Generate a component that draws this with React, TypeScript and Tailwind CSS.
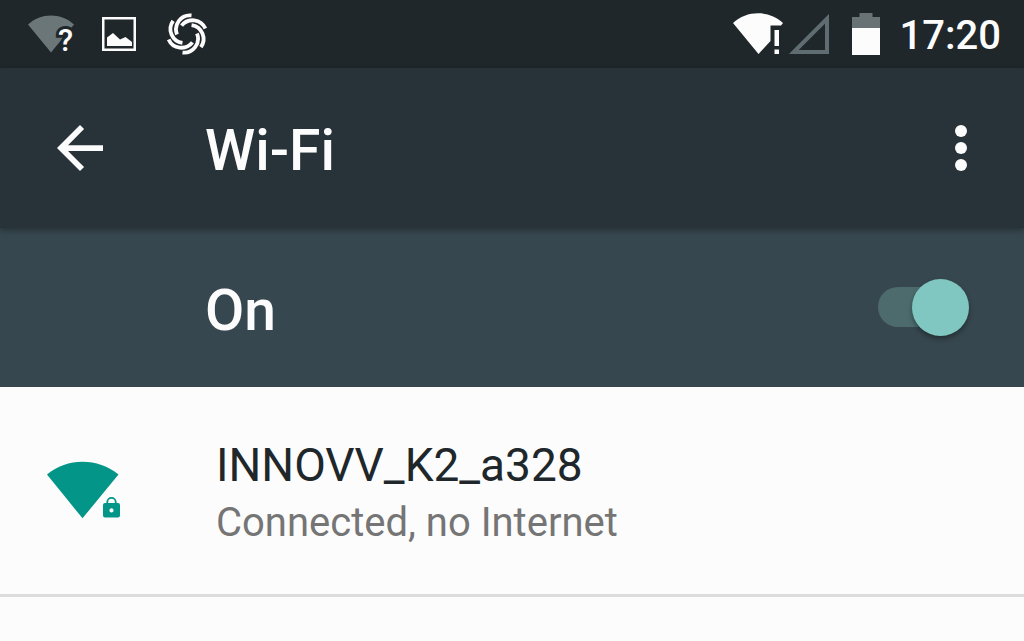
import { useState } from "react";

const WifiUnknownIcon = () => (
  <svg width="56" height="56" viewBox="0 -8 56 56" aria-hidden="true">
    <path d="M0 10.500C13-1.500 33-1.500 46 10.500L23 38.500Z" fill="#6b7679" />
    <text
      x="37.500"
      y="37"
      textAnchor="middle"
      fontSize="31"
      className="font-[Roboto,sans-serif] font-medium"
      fill="#fcfcfc"
      stroke="#20272b"
      strokeWidth="6"
      paintOrder="stroke"
    >
      ?
    </text>
  </svg>
);

const PictureIcon = () => (
  <svg width="34" height="34" viewBox="0 0 34 34" aria-hidden="true">
    <rect x="1.250" y="1.250" width="31.500" height="31.500" fill="none" stroke="#fcfcfc" strokeWidth="2.500" />
    <path d="M5 29V20.500L11 16L18 22.500L23.500 20L30 25V29Z" fill="#fcfcfc" />
  </svg>
);

const SwirlIcon = () => (
  <svg width="42" height="42" viewBox="-21 -21 42 42" aria-hidden="true">
    {[0, 60, 120, 180, 240, 300].map((angle) => (
      <path
        key={angle}
        d="M4.500 -18.600A14 14 0 0 0 -10 .5"
        transform={`rotate(${angle})`}
        fill="none"
        stroke="#fcfcfc"
        strokeWidth="3.800"
      />
    ))}
  </svg>
);

const WifiAlertIcon = () => (
  <svg width="51" height="42" viewBox="0 0 51 42" aria-hidden="true">
    <path d="M0 10C14-3 36-3 50 10L48 12.500H37.500V28L25.500 41Z" fill="#fcfcfc" />
    <path d="M41.500 17H46V33H41.500ZM41.500 36.500H46V41H41.500Z" fill="#fcfcfc" />
  </svg>
);

const SignalIcon = () => (
  <svg width="40" height="40" viewBox="0 0 40 40" aria-hidden="true">
    <path d="M4.800 38L38 4.800V38Z" fill="none" stroke="#5f6c71" strokeWidth="4" />
  </svg>
);

const BatteryIcon = () => (
  <svg width="28" height="42" viewBox="0 0 28 42" aria-hidden="true">
    <path d="M7.500 0H20.500V4H28V15H0V4H7.500Z" fill="#697376" />
    <path d="M0 15H28V42H0Z" fill="#fcfcfc" />
  </svg>
);

const BackIcon = () => (
  <svg width="46" height="46" viewBox="4 4 16 16" aria-hidden="true">
    <path
      d="M20 11H7.830l5.590-5.590L12 4l-8 8 8 8 1.410-1.410L7.830 13H20v-2z"
      fill="#fcfcfc"
    />
  </svg>
);

const MoreIcon = () => (
  <svg width="12" height="46" viewBox="0 0 12 46" fill="#fcfcfc" aria-hidden="true">
    <circle cx="6" cy="6" r="6" />
    <circle cx="6" cy="23" r="6" />
    <circle cx="6" cy="40" r="6" />
  </svg>
);

const SecuredWifiIcon = () => (
  <svg width="73" height="58" viewBox="0 0 73 58" fill="#029588" aria-hidden="true">
    <path d="M0 13.500C20-3.500 51-3.500 71.500 13.500L35.500 57.300Z" />
    <path
      fillRule="evenodd"
      d="M58 42H71Q73 42 73 44V54.500Q73 56.500 71 56.500H58Q56 56.500 56 54.500V44Q56 42 58 42ZM64.500 47.300a2.100 2.100 0 1 0 0 4.200a2.100 2.100 0 1 0 0-4.200Z"
    />
    <path d="M60.300 43V41a4.200 4.200 0 0 1 8.400 0V43" fill="none" stroke="#029588" strokeWidth="1.800" />
  </svg>
);

const StatusBar = () => (
  <div className="flex items-center justify-between bg-[#20272b] pl-7 pr-[23px]">
    <div className="flex items-center">
      <WifiUnknownIcon />
      <div className="pr-[30px] pl-[18px]">
        <PictureIcon />
      </div>
      <SwirlIcon />
    </div>
    <div className="flex items-center">
      <div className="flex items-center gap-[5px]">
        <WifiAlertIcon />
        <SignalIcon />
      </div>
      <div className="pr-5 pl-[23px]">
        <BatteryIcon />
      </div>
      <time className="pt-1 text-[40px] leading-[64px] font-medium">17:20</time>
    </div>
  </div>
);

const App = () => {
  const [enabled, setEnabled] = useState(true);

  return (
    <div className="min-h-screen bg-[#fcfcfc] font-[Roboto,sans-serif] text-[#fcfcfc]">
      <StatusBar />

      <header className="relative z-10 flex items-center bg-[#273338] py-[45px] pr-[57px] pl-[57px] shadow-[0_2px_6px_rgba(0,0,0,0.35)]">
        <button type="button" aria-label="Navigate up">
          <BackIcon />
        </button>
        <h1 className="flex-1 pt-[6px] pl-[102px] text-[57px] leading-[64px] font-medium">Wi-Fi</h1>
        <button type="button" aria-label="More options">
          <MoreIcon />
        </button>
      </header>

      <label className="flex cursor-pointer items-center justify-between bg-[#37474f] pt-[43px] pr-[55px] pb-[44px] pl-[205px]">
        <span className="pt-2 text-[57px] leading-[64px] font-medium">{enabled ? "On" : "Off"}</span>
        <span className="grid items-center">
          <input
            type="checkbox"
            role="switch"
            checked={enabled}
            onChange={(e) => setEnabled(e.target.checked)}
            className="peer col-start-1 row-start-1 h-10 w-20 appearance-none rounded-full bg-[#52666b] checked:bg-[#4d6b6d]"
          />
          <span className="col-start-1 row-start-1 size-[57px] rounded-full bg-[#b9b9b9] shadow-[0_3px_5px_rgba(0,0,0,0.35)] peer-checked:ml-[34px] peer-checked:bg-[#7fc7c0]" />
        </span>
      </label>

      <ul>
        <li className="border-b-3 border-[#dcdcdc]">
          <button
            type="button"
            className="flex w-full items-center gap-24 pt-[41px] pr-14 pb-[43px] pl-[47px] text-left"
          >
            <SecuredWifiIcon />
            <span className="flex flex-col pt-[7px]">
              <span className="text-[46px] leading-[60px] text-[#20272b]">INNOVV_K2_a328</span>
              <span className="text-[40px] leading-[56px] text-[#757575]">
                Connected, no Internet
              </span>
            </span>
          </button>
        </li>
      </ul>
    </div>
  );
};

export default App;
